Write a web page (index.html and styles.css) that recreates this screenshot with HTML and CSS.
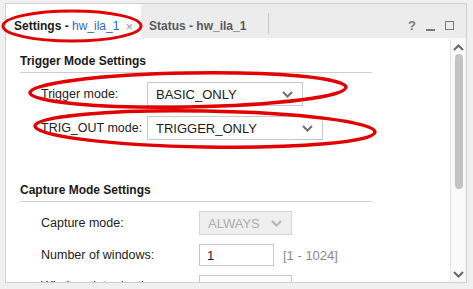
FILE: index.html
```html
<!DOCTYPE html>
<html>
<head>
    <title>ILA Settings</title>
    <link rel="stylesheet" href="styles.css">
</head>
<body>
    <div class="panel">
        <div class="tabbar">
            <div class="tab active">
                <span><b>Settings -</b> <span class="tab-link">hw_ila_1</span></span>
                <span class="tab-close">&times;</span>
            </div>
            <div class="tab">Status - hw_ila_1</div>
            <div class="tab-sep"></div>
            <div class="tab-tools">
                <span class="tool-help">?</span>
                <span class="tool-min"></span>
                <span class="tool-max"></span>
            </div>
        </div>

        <div class="panel-body">
            <div class="content">
                <div class="section">
                    <div class="section-title">Trigger Mode Settings</div>
                    <div class="form-grid trigger-grid">
                        <label>Trigger mode:</label>
                        <div class="select w-156">
                            <span>BASIC_ONLY</span>
                            <svg width="11" height="7" viewBox="0 0 11 7"><polyline points="1,1 5.5,5.5 10,1" fill="none" stroke="#6f6f6f" stroke-width="2"/></svg>
                        </div>
                        <label>TRIG_OUT mode:</label>
                        <div class="select w-176">
                            <span>TRIGGER_ONLY</span>
                            <svg width="11" height="7" viewBox="0 0 11 7"><polyline points="1,1 5.5,5.5 10,1" fill="none" stroke="#6f6f6f" stroke-width="2"/></svg>
                        </div>
                    </div>
                </div>

                <div class="section capture">
                    <div class="section-title">Capture Mode Settings</div>
                    <div class="form-grid capture-grid">
                        <label>Capture mode:</label>
                        <div class="select disabled w-93">
                            <span>ALWAYS</span>
                            <svg width="11" height="7" viewBox="0 0 11 7"><polyline points="1,1 5.5,5.5 10,1" fill="none" stroke="#b4b4b4" stroke-width="2"/></svg>
                        </div>
                        <label>Number of windows:</label>
                        <div class="field-row">
                            <div class="input w-75">1</div>
                            <span class="range">[1 - 1024]</span>
                        </div>
                        <label>Window data depth:</label>
                        <div class="field-row">
                            <div class="input w-93">1024</div>
                            <span class="range">[1 - 1024]</span>
                        </div>
                    </div>
                </div>
            </div>
            <div class="scrollbar">
                <svg class="arrow" width="11" height="7" viewBox="0 0 11 7"><polyline points="1,6 5.5,1.5 10,6" fill="none" stroke="#666" stroke-width="2"/></svg>
                <div class="thumb"></div>
                <svg class="arrow down" width="11" height="7" viewBox="0 0 11 7"><polyline points="1,1 5.5,5.5 10,1" fill="none" stroke="#666" stroke-width="2"/></svg>
            </div>
        </div>
    </div>

    <!-- red annotation marks drawn over the screenshot -->
    <svg class="marks" width="473" height="289" viewBox="0 0 473 289">
        <ellipse cx="72" cy="26" rx="69" ry="15" fill="none" stroke="#e30000" stroke-width="3"/>
        <ellipse cx="188" cy="90" rx="158" ry="17" transform="rotate(-1 188 90)" fill="none" stroke="#e30000" stroke-width="3.5"/>
        <ellipse cx="205" cy="129" rx="170" ry="18" transform="rotate(1 205 129)" fill="none" stroke="#e30000" stroke-width="3.5"/>
    </svg>
</body>
</html>
```

FILE: styles.css
```css
body {
    margin: 0;
    background: #f0f0f0;
    font-family: "Liberation Sans", Arial, sans-serif;
    font-size: 12px;
    color: #1a1a1a;
    overflow: hidden;
}
.panel {
    margin: 3px 0 0 5px;
    width: 460px;
    height: 278px;
    border: 1px solid #cfcfcf;
    background: #fff;
    display: flex;
    flex-direction: column;
}
.tabbar {
    height: 34px;
    background: #ececec;
    display: flex;
    align-items: stretch;
    flex-shrink: 0;
}
.tab {
    display: flex;
    align-items: center;
    padding: 10px 8px 0;
    font-weight: bold;
    color: #5a5a5a;
    white-space: pre;
}
.tab.active {
    background: #fff;
    color: #1a1a1a;
    padding: 10px 8px 0 8px;
    font-weight: normal;
}
.tab-link {
    color: #2f68c8;
}
.tab-close {
    color: #9a9a9a;
    font-size: 13px;
    margin-left: 6px;
}
.tab-sep {
    width: 1px;
    background: #c8c8c8;
    margin: 9px 0 4px 14px;
}
.tab-tools {
    margin-left: auto;
    display: flex;
    align-items: center;
    gap: 10px;
    padding: 8px 12px 0 0;
}
.tool-help {
    font-weight: bold;
    font-size: 13px;
    color: #7a7a7a;
}
.tool-min {
    width: 9px;
    height: 2px;
    background: #7a7a7a;
    margin-top: 9px;
}
.tool-max {
    width: 7px;
    height: 7px;
    border: 1px solid #7a7a7a;
}
.panel-body {
    flex: 1;
    display: flex;
    min-height: 0;
}
.content {
    flex: 1;
    overflow: hidden;
    padding: 16px 0 0 14px;
}
.section-title {
    width: 352px;
    font-weight: bold;
    font-size: 12px;
    padding-bottom: 4px;
    border-bottom: 1px solid #cdcdcd;
}
.form-grid {
    display: grid;
    align-items: center;
    row-gap: 10px;
    padding-left: 21px;
    margin-top: 9px;
}
.form-grid label {
    font-size: 12.5px;
    color: #222;
}
.trigger-grid {
    grid-template-columns: 106px auto;
}
.capture {
    margin-top: 43px;
}
.capture-grid {
    grid-template-columns: 158px auto;
    row-gap: 9px;
}
.select {
    height: 22px;
    border: 1px solid #c8c8c8;
    background: #fff;
    display: flex;
    align-items: center;
    justify-content: space-between;
    padding: 0 8px;
    font-size: 13px;
    box-sizing: content-box;
}
.select svg {
    margin-right: 1px;
}
.select.disabled {
    background: #efefef;
    border-color: #d4d4d4;
    color: #adadad;
}
.w-156 { width: 138px; }
.w-176 { width: 158px; }
.w-93 { width: 75px; }
.field-row {
    display: flex;
    align-items: center;
    gap: 9px;
}
.input {
    height: 20px;
    border: 1px solid #c8c8c8;
    display: flex;
    align-items: center;
    padding: 0 7px;
    font-size: 13px;
}
.input.w-75 { width: 59px; }
.input.w-93 { width: 77px; }
.range {
    color: #8a8a8a;
    font-size: 13px;
}
.scrollbar {
    width: 16px;
    border-left: 1px solid #e4e4e4;
    background: #f9f9f9;
    display: flex;
    flex-direction: column;
    align-items: center;
    padding-top: 6px;
    box-sizing: border-box;
}
.thumb {
    width: 8px;
    height: 135px;
    margin-top: 3px;
    background: #c4c4c4;
    border-radius: 4px;
}
.arrow.down {
    margin-top: auto;
    margin-bottom: 4px;
}
.marks {
    position: absolute;
    left: 0;
    top: 0;
    pointer-events: none;
}
```
